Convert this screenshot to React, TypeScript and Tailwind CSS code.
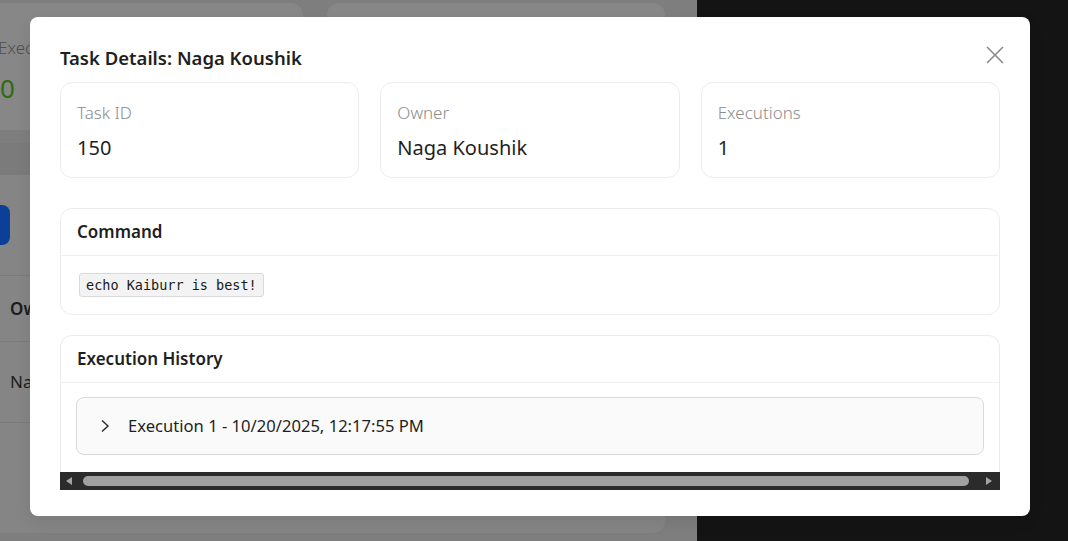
function StatCard({ label, value }: { label: string; value: string }) {
  return (
    <div className="h-[96px] rounded-xl border border-[#ececec] bg-white px-[16px] pt-[18px]">
      <div className="text-[17px] leading-[24px] font-light text-[#8c8c8c]">{label}</div>
      <div className="mt-[9px] text-[20px] leading-[28px] text-[#1f1f1f]">{value}</div>
    </div>
  );
}

function CloseIcon() {
  return (
    <svg width="18" height="18" viewBox="0 0 18 18" fill="none" stroke="#8a8a8a" strokeWidth="1.6">
      <path d="M1 1 L17 17 M17 1 L1 17" />
    </svg>
  );
}

function Chevron() {
  return (
    <svg width="10" height="14" viewBox="0 0 10 14" fill="none" stroke="#2a2a2a" strokeWidth="1.4">
      <path d="M2 1.5 L8 7 L2 12.5" />
    </svg>
  );
}

function Backdrop() {
  return (
    <div className="flex h-full w-[697px] flex-col bg-[#7e7e7e] pt-[3px]">
      <div className="flex gap-[24px]">
        <div className="h-[127px] w-[303px] rounded-r-xl bg-[#878787] pt-[32px]">
          <div className="-ml-[2px] text-[17px] font-light text-[#4f4f4f]">Executions</div>
          <div className="mt-[10px] text-[26px] leading-[34px] text-[#2f6b12]">0</div>
        </div>
        <div className="h-[127px] w-[338px] rounded-xl bg-[#878787]" />
      </div>
      <div className="mt-[13px] flex h-[390px] w-[665px] flex-col rounded-br-xl bg-[#858585]">
        <div className="h-[32px] bg-[#7b7b7b]" />
        <div className="mt-[30px] h-[40px] w-[10px] rounded-r-lg bg-[#0b3f98]" />
        <div className="mt-[30px] flex h-[67px] items-center border-y border-[#7a7a7a] pl-[10px] text-[17px] font-semibold text-[#1c1c1c]">
          Owner
        </div>
        <div className="flex h-[81px] items-center border-b border-[#7a7a7a] pl-[10px] text-[17px] text-[#1c1c1c]">
          Naga Koushik
        </div>
      </div>
    </div>
  );
}

export default function App() {
  return (
    <div className="relative flex h-[541px] w-[1068px] overflow-hidden font-['Noto_Sans',sans-serif]">
      <Backdrop />
      <div className="flex-1 bg-[#141414]" />

      <div className="absolute left-[30px] top-[17px] flex h-[499px] w-[1000px] flex-col rounded-lg bg-white px-[30px] pt-[27px] shadow-[0_6px_16px_rgba(0,0,0,0.08)]">
        <div className="flex items-center justify-between">
          <h2 className="text-[18.5px] leading-[28px] font-semibold text-[#1f1f1f]">Task Details: Naga Koushik</h2>
          <button className="-mr-[9px] -mt-[6px] flex h-[28px] w-[28px] items-center justify-center">
            <CloseIcon />
          </button>
        </div>

        <div className="mt-[10px] flex flex-col">
          <div className="grid grid-cols-3 gap-[21px]">
            <StatCard label="Task ID" value="150" />
            <StatCard label="Owner" value="Naga Koushik" />
            <StatCard label="Executions" value="1" />
          </div>

          <div className="mt-[30px] rounded-xl border border-[#ececec]">
            <div className="flex h-[47px] items-center border-b border-[#efefef] px-[16px] text-[17px] font-semibold text-[#1f1f1f]">
              Command
            </div>
            <div className="flex px-[18px] pb-[17px] pt-[17px]">
              <code className="flex h-[24px] items-center rounded-[3px] border border-[#d9d9d9] bg-[#f3f3f3] px-[6px] font-['DejaVu_Sans_Mono',monospace] text-[13.5px] text-[#1a1a1a]">
                echo Kaiburr is best!
              </code>
            </div>
          </div>

          <div className="mt-[20px] flex flex-col">
            <div className="h-[137px] rounded-t-xl border border-b-0 border-[#ececec]">
              <div className="flex h-[47px] items-center border-b border-[#efefef] px-[16px] text-[17px] font-semibold text-[#1f1f1f]">
                Execution History
              </div>
              <div className="px-[15px] pt-[14px]">
                <div className="flex h-[58px] items-center gap-[18px] rounded-lg border border-[#d9d9d9] bg-[#fafafa] px-[23px] text-[16.6px] text-[#1f1f1f]">
                  <Chevron />
                  <span>Execution 1 - 10/20/2025, 12:17:55 PM</span>
                </div>
              </div>
            </div>
            <div className="flex h-[18px] items-center bg-[#2b2b2b] pl-[6px] pr-[8px]">
              <svg width="6" height="8" viewBox="0 0 6 8" fill="#a3a3a3">
                <path d="M6 0 L0 4 L6 8 Z" />
              </svg>
              <div className="ml-[11px] mr-[17px] h-[10px] flex-1 rounded-full bg-[#a0a0a0]" />
              <svg width="6" height="8" viewBox="0 0 6 8" fill="#a3a3a3">
                <path d="M0 0 L6 4 L0 8 Z" />
              </svg>
            </div>
          </div>
        </div>
      </div>
    </div>
  );
}
